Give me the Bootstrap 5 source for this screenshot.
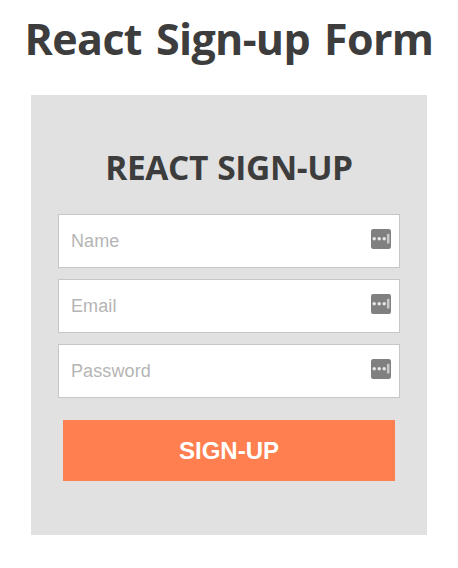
<!DOCTYPE html>
<html lang="en">
<head>
<meta charset="utf-8">
<meta name="viewport" content="width=device-width, initial-scale=1">
<title>React Sign-up Form</title>
<link href="https://cdn.jsdelivr.net/npm/bootstrap@5.3.0/dist/css/bootstrap.min.css" rel="stylesheet">
<style>
body { background: #fff; color: #3d3d3d; font-family: "Segoe UI", "Open Sans", sans-serif; }
.page-title { font-size: 43px; line-height: 60px; padding-top: 9px; margin-bottom: 26px; letter-spacing: -.65px; word-spacing: 3.5px; }
.signup-panel { width: 396px; height: 440px; background: #e1e1e1; padding: 47px 27px 0; }
.panel-title { font-size: 33.5px; line-height: 50px; margin-bottom: 22px; letter-spacing: -.4px; word-spacing: 1px; }
.field { height: 54px; margin-bottom: 11px; }
.field .form-control { height: 54px; border-color: #c6c6c6; padding: 0 44px 0 12px; font: 18px "Liberation Sans", Arial, sans-serif; letter-spacing: .1px; }
.field .form-control::placeholder { color: #b5b5b5; opacity: 1; }
.fill-icon { top: 15px; right: 9px; }
.signup-btn { width: 332px; height: 61px; margin-top: 22px; background: #ff7f50; color: #fff; font: bold 24px "Liberation Sans", Arial, sans-serif; }
</style>
</head>
<body>
<svg class="d-none">
  <symbol id="autofill" viewBox="0 0 20 20">
    <rect width="20" height="20" rx="2.2" fill="#808080"/>
    <g fill="#e8e8e8"><circle cx="3.2" cy="9.8" r="1.7"/><circle cx="8.2" cy="9.8" r="1.7"/><circle cx="13.2" cy="9.8" r="1.7"/></g>
    <rect x="15.9" y="4.8" width="2.6" height="9.8" rx=".9" fill="#c8c8c8"/>
  </symbol>
</svg>
<main class="d-flex flex-column align-items-center">
  <h1 class="page-title fw-bold text-center text-nowrap">React Sign-up Form</h1>
  <form class="signup-panel">
    <h2 class="panel-title fw-bold text-center text-uppercase text-nowrap">React Sign-up</h2>
    <div class="field position-relative">
      <input type="text" class="form-control rounded-0" placeholder="Name" aria-label="Name">
      <svg class="fill-icon position-absolute" width="20" height="20" aria-hidden="true"><use href="#autofill"/></svg>
    </div>
    <div class="field position-relative">
      <input type="email" class="form-control rounded-0" placeholder="Email" aria-label="Email">
      <svg class="fill-icon position-absolute" width="20" height="20" aria-hidden="true"><use href="#autofill"/></svg>
    </div>
    <div class="field position-relative mb-0">
      <input type="password" class="form-control rounded-0" placeholder="Password" aria-label="Password">
      <svg class="fill-icon position-absolute" width="20" height="20" aria-hidden="true"><use href="#autofill"/></svg>
    </div>
    <button type="button" class="signup-btn btn d-block mx-auto rounded-0 border-0 p-0">SIGN-UP</button>
  </form>
</main>
<script src="https://cdn.jsdelivr.net/npm/bootstrap@5.3.0/dist/js/bootstrap.bundle.min.js"></script>
</body>
</html>
